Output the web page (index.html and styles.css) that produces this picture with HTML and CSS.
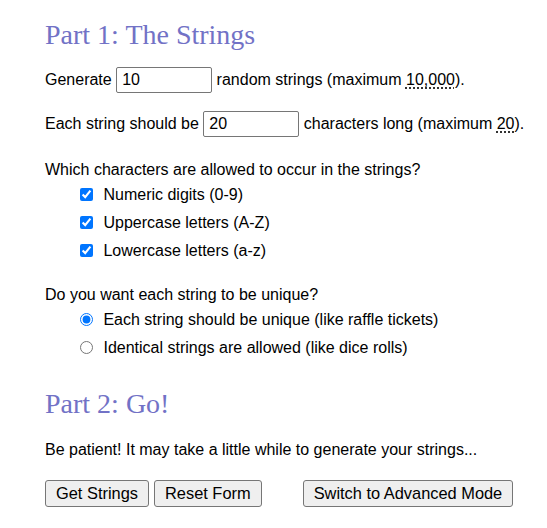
FILE: index.html
```html
<!DOCTYPE html>
<html>
<head>
<meta charset="utf-8">
<link rel="stylesheet" href="styles.css">
</head>
<body>
<form class="page">
  <h2 class="title first">Part 1: The Strings</h2>
  <p class="row r1">Generate <input class="num" type="text" value="10"> random strings (maximum <abbr title="ten thousand">10,000</abbr>).</p>
  <p class="row r2">Each string should be <input class="num" type="text" value="20"> characters long (maximum <abbr title="twenty">20</abbr>).</p>
  <p class="q q1">Which characters are allowed to occur in the strings?</p>
  <ul class="opts">
    <li><label><input type="checkbox" checked> Numeric digits (0-9)</label></li>
    <li><label><input type="checkbox" checked> Uppercase letters (A-Z)</label></li>
    <li><label><input type="checkbox" checked> Lowercase letters (a-z)</label></li>
  </ul>
  <p class="q q2">Do you want each string to be unique?</p>
  <ul class="opts">
    <li><label><input type="radio" name="u" checked> Each string should be unique (like raffle tickets)</label></li>
    <li><label><input type="radio" name="u"> Identical strings are allowed (like dice rolls)</label></li>
  </ul>
  <h2 class="title second">Part 2: Go!</h2>
  <p class="q q3">Be patient! It may take a little while to generate your strings...</p>
  <div class="buttons">
    <button type="button" class="btn">Get Strings</button>
    <button type="reset" class="btn">Reset Form</button>
    <button type="button" class="btn adv">Switch to Advanced Mode</button>
  </div>
</form>
</body>
</html>
```
FILE: styles.css
```css
html, body {
  margin: 0;
  padding: 0;
  background: #ffffff;
}
body {
  font-family: "Liberation Sans", Arial, sans-serif;
  font-size: 16px;
  color: #000;
}
.page {
  padding-left: 45px;
}
.title {
  font-family: "Liberation Serif", "DejaVu Serif", serif;
  font-weight: normal;
  font-size: 28px;
  line-height: 30px;
  color: #7272c6;
  margin: 0;
}
.title.first { padding-top: 20px; }
.title.second { margin-top: 27px; }
.row {
  margin: 0;
  height: 26px;
  line-height: 26px;
  white-space: nowrap;
}
.r1 { margin-top: 17px; }
.r2 { margin-top: 18px; }
.num {
  box-sizing: border-box;
  width: 96px;
  height: 26px;
  margin: 0;
  padding: 0 5px;
  vertical-align: top;
  border: 1px solid #767676;
  border-radius: 2px;
  font-family: "Liberation Sans", Arial, sans-serif;
  font-size: 16px;
  color: #000;
}
abbr {
  text-decoration: underline dotted;
  text-underline-offset: 3px;
}
.q {
  margin: 0;
  line-height: 20px;
}
.q1 { margin-top: 23px; }
.q2 { margin-top: 20px; }
.q3 { margin-top: 21px; }
.opts {
  list-style: none;
  margin: 1px 0 0;
  padding: 0 0 0 31px;
}
.opts li {
  height: 28px;
  display: flex;
  align-items: center;
}
.opts input {
  margin: 0 6px 0 4px;
  width: 13px;
  height: 13px;
  vertical-align: -1px;
}
.buttons {
  margin-top: 20px;
  display: flex;
}
.btn {
  font-family: "Liberation Sans", Arial, sans-serif;
  font-size: 16.4px;
  height: 27px;
  padding: 0 10px;
  margin: 0 5px 0 0;
  background: #efefef;
  border: 1px solid #767676;
  border-radius: 3px;
  color: #000;
}
.btn.adv { margin-left: 36px; }
```
